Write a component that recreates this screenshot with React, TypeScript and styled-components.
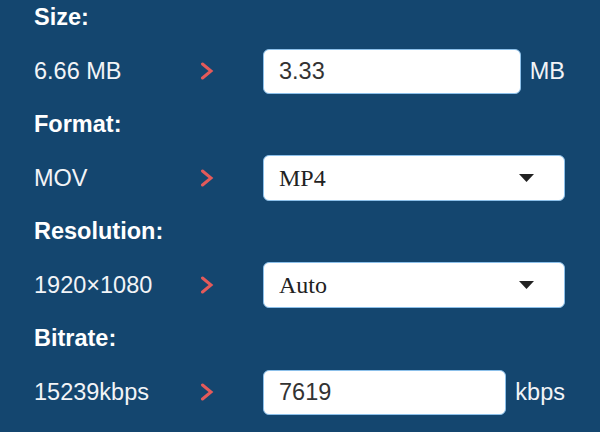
import React from "react";
import styled, { createGlobalStyle } from "styled-components";

const Global = createGlobalStyle`
  html, body { margin: 0; padding: 0; background: #14466f; }
  body { font-family: "Liberation Sans", Arial, sans-serif; }
  * { box-sizing: border-box; }
`;

const Page = styled.div`
  width: 600px;
  height: 432px;
  background: #14466f;
  padding: 1px 35px 0 34px;
  display: flex;
  flex-direction: column;
  gap: 14px;
  overflow: hidden;
`;

const Section = styled.section`
  display: flex;
  flex-direction: column;
  gap: 13px;
`;

const Label = styled.div`
  color: #ffffff;
  font-weight: 700;
  font-size: 23.5px;
  line-height: 32px;
  height: 34px;
`;

const Row = styled.div`
  display: grid;
  grid-template-columns: 166px 63px minmax(0, 1fr);
  align-items: center;
  height: 46px;
`;

const Value = styled.div`
  color: #f2f4f7;
  font-size: 23.5px;
  white-space: nowrap;
`;

const Arrow = styled.svg`
  width: 14px;
  height: 18px;
  display: block;
`;

const Control = styled.div`
  display: flex;
  align-items: center;
  gap: 9px;
  height: 100%;
  min-width: 0;
`;

const TextField = styled.input`
  flex: 1 1 0;
  width: 0;
  min-width: 0;
  height: 45px;
  border: 1.5px solid #8cc0ea;
  border-radius: 6px;
  background: #ffffff;
  padding: 0 0 0 15px;
  font-family: "Liberation Sans", Arial, sans-serif;
  font-size: 23.5px;
  color: #333333;
  outline: none;
`;

const Unit = styled.span`
  color: #f2f4f7;
  font-size: 23.5px;
`;

const SelectWrap = styled.div`
  position: relative;
  flex: 1;
  height: 46px;
`;

const Select = styled.select`
  appearance: none;
  -webkit-appearance: none;
  width: 100%;
  height: 100%;
  border: 1.5px solid #8cc0ea;
  border-radius: 6px;
  background: #ffffff;
  padding: 0 0 0 15px;
  font-family: "Liberation Serif", "Times New Roman", serif;
  font-size: 24px;
  color: #222222;
  outline: none;
`;

const Caret = styled.svg`
  position: absolute;
  right: 31px;
  top: 50%;
  width: 15px;
  height: 8px;
  transform: translateY(-50%);
  pointer-events: none;
`;

const Chevron = () => (
  <Arrow viewBox="0 0 14 18">
    <path
      d="M2.5 2 L11 9 L2.5 16"
      fill="none"
      stroke="#e45a5a"
      strokeWidth="3"
      strokeLinecap="round"
      strokeLinejoin="miter"
    />
  </Arrow>
);

type Item =
  | { label: string; value: string; kind: "input"; target: string; unit: string }
  | { label: string; value: string; kind: "select"; target: string; options: string[] };

const items: Item[] = [
  { label: "Size:", value: "6.66 MB", kind: "input", target: "3.33", unit: "MB" },
  { label: "Format:", value: "MOV", kind: "select", target: "MP4", options: ["MP4", "MOV", "AVI", "MKV"] },
  { label: "Resolution:", value: "1920×1080", kind: "select", target: "Auto", options: ["Auto", "1920×1080", "1280×720"] },
  { label: "Bitrate:", value: "15239kbps", kind: "input", target: "7619", unit: "kbps" },
];

export default function App() {
  return (
    <>
      <Global />
      <Page>
        {items.map((it) => (
          <Section key={it.label}>
            <Label>{it.label}</Label>
            <Row>
              <Value>{it.value}</Value>
              <Chevron />
              <Control>
                {it.kind === "input" ? (
                  <>
                    <TextField defaultValue={it.target} />
                    <Unit>{it.unit}</Unit>
                  </>
                ) : (
                  <SelectWrap>
                    <Select defaultValue={it.target}>
                      {it.options.map((o) => (
                        <option key={o}>{o}</option>
                      ))}
                    </Select>
                    <Caret viewBox="0 0 15 8">
                      <path d="M0 0 L15 0 L7.5 8 Z" fill="#222" />
                    </Caret>
                  </SelectWrap>
                )}
              </Control>
            </Row>
          </Section>
        ))}
      </Page>
    </>
  );
}
